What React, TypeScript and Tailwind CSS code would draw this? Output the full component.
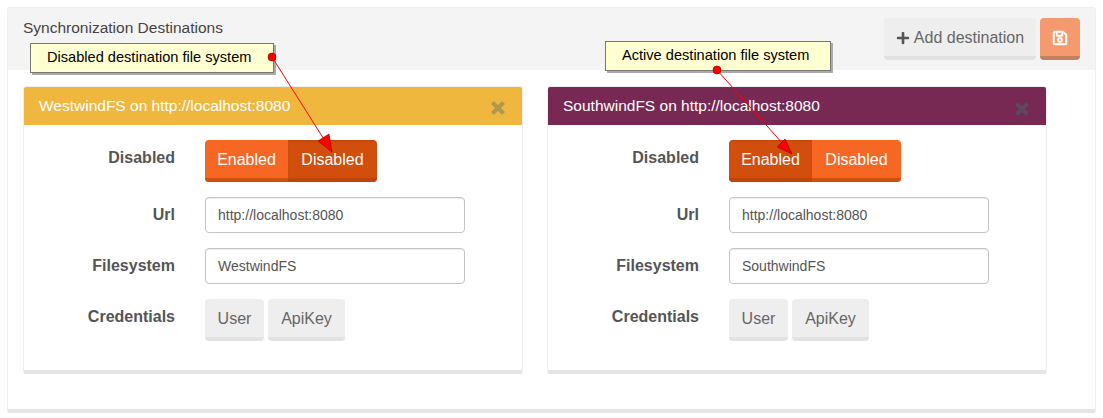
import { FaPlus, FaRegSave } from "react-icons/fa";

function Field({ label, children }: { label: string; children: React.ReactNode }) {
  return (
    <div className="flex">
      <label className="w-[151px] pt-[7px] text-right text-[16px] leading-[22px] font-bold text-[#555]">{label}</label>
      <div className="ml-[30px]">{children}</div>
    </div>
  );
}

function TextBox({ value }: { value: string }) {
  return (
    <input
      readOnly
      value={value}
      className="block h-[36px] w-[260px] rounded-[4px] border border-[#c4c4c4] bg-white px-[12px] text-[14px] text-[#555] shadow-[inset_0_1px_1px_rgba(0,0,0,0.07)] outline-none"
    />
  );
}

function Toggle({ active }: { active: "Enabled" | "Disabled" }) {
  const on = "bg-[#d14e0c] border-b-[4px] border-b-[#bf450a] shadow-[inset_0_1px_2px_rgba(0,0,0,0.1)]";
  const off = "bg-[#f56723] border-b-[4px] border-b-[#d14e0c]";
  return (
    <div className="flex h-[42px] overflow-hidden rounded-[4px] text-[16px] text-white">
      <div className={`flex w-[83px] items-center justify-center pt-[2px] ${active === "Enabled" ? on : off}`}>Enabled</div>
      <div className={`flex w-[89px] items-center justify-center pt-[2px] ${active === "Disabled" ? on : off}`}>Disabled</div>
    </div>
  );
}

// chunky close cross, the icon font one is too thin here
function CloseIcon({ className }: { className: string }) {
  return (
    <svg viewBox="0 0 16 16" width="16" height="16" className={className}>
      <path d="M2.5 2.5 13.5 13.5M13.5 2.5 2.5 13.5" stroke="currentColor" strokeWidth="4.2" fill="none" />
    </svg>
  );
}

function Card({ name, header, closeClass, active }: { name: string; header: string; closeClass: string; active: "Enabled" | "Disabled" }) {
  return (
    <div className="h-[288px] w-[500px] rounded-[3px] border border-[#eee] border-b-[4px] border-b-[#e5e5e5] bg-white">
      <div className={`flex h-[38px] items-center justify-between rounded-t-[2px] pr-[16px] pl-[15px] text-[15.5px] text-white ${header}`}>
        <span>{name} on http://localhost:8080</span>
        <CloseIcon className={closeClass} />
      </div>
      <div className="flex flex-col gap-[15px] pt-[15px]">
        <Field label="Disabled"><Toggle active={active} /></Field>
        <Field label="Url"><TextBox value="http://localhost:8080" /></Field>
        <Field label="Filesystem"><TextBox value={name} /></Field>
        <Field label="Credentials">
          <div className="flex gap-[4px] text-[16px] text-[#666]">
            <div className="flex h-[42px] w-[59px] items-center justify-center rounded-[4px] border-b-[4px] border-b-[#e2e2e2] bg-[#eee] pt-[2px]">User</div>
            <div className="flex h-[42px] w-[77px] items-center justify-center rounded-[4px] border-b-[4px] border-b-[#e2e2e2] bg-[#eee] pt-[2px]">ApiKey</div>
          </div>
        </Field>
      </div>
    </div>
  );
}

function Callout({ text, className }: { text: string; className: string }) {
  return (
    <div className={`absolute flex h-[30px] items-center border border-[#777] bg-[#ffffd2] text-[14.6px] text-black shadow-[2px_2px_0_#aaa] ${className}`}>
      {text}
    </div>
  );
}

export default function App() {
  return (
    <div className="relative h-[418px] w-[1103px] overflow-hidden bg-white font-['Liberation_Sans',Arial,sans-serif]">
      <div className="mt-[7px] ml-[7px] h-[406px] w-[1089px] rounded-[3px] border border-[#eee] border-b-[4px] border-b-[#e5e5e5] bg-white">
        <div className="flex h-[62px] justify-between rounded-t-[2px] bg-[#f4f4f4] px-[15px]">
          <h1 className="pt-[10px] text-[15.5px] leading-[20px] font-normal text-[#444]">Synchronization Destinations</h1>
          <div className="flex gap-[4px] pt-[10px]">
            <div className="flex h-[42px] w-[152px] items-center justify-center gap-[4px] rounded-[4px] border-b-[4px] border-b-[#e2e2e2] bg-[#eee] pt-[2px] text-[16px] text-[#666]">
              <FaPlus className="text-[14px] text-[#555]" />
              Add destination
            </div>
            <div className="flex h-[42px] w-[40px] items-center justify-center rounded-[4px] border-b-[4px] border-b-[#c5805f] bg-[#f59a6e] pt-[2px] text-white">
              <FaRegSave className="stroke-[15px] text-[16px]" />
            </div>
          </div>
        </div>
        <div className="flex gap-[24px] pt-[16px] pl-[15px]">
          <Card name="WestwindFS" header="bg-[#f0b73f]" closeClass="mt-[4px] text-[#b0984f]" active="Disabled" />
          <Card name="SouthwindFS" header="bg-[#772953]" closeClass="mt-[6px] text-[#5f4763]" active="Enabled" />
        </div>
      </div>

      <Callout text="Disabled destination file system" className="top-[43px] left-[30px] w-[244px] pl-[16px]" />
      <Callout text="Active destination file system" className="top-[41px] left-[605px] w-[226px] pl-[16px]" />

      <svg className="pointer-events-none absolute top-0 left-0" width="1103" height="418">
        <line x1="272" y1="57" x2="332" y2="152" stroke="#f00" strokeWidth="1" />
        <polygon points="318,141 329,134 332,152" fill="#f00" stroke="#a00" strokeWidth="0.7" />
        <circle cx="272" cy="57" r="4" fill="#f00" stroke="#900" strokeWidth="0.7" />
        <line x1="717" y1="70" x2="792" y2="154" stroke="#f00" strokeWidth="1" />
        <polygon points="777,147 785,139 792,154" fill="#f00" stroke="#a00" strokeWidth="0.7" />
        <circle cx="717" cy="70" r="4" fill="#f00" stroke="#900" strokeWidth="0.7" />
      </svg>
    </div>
  );
}
